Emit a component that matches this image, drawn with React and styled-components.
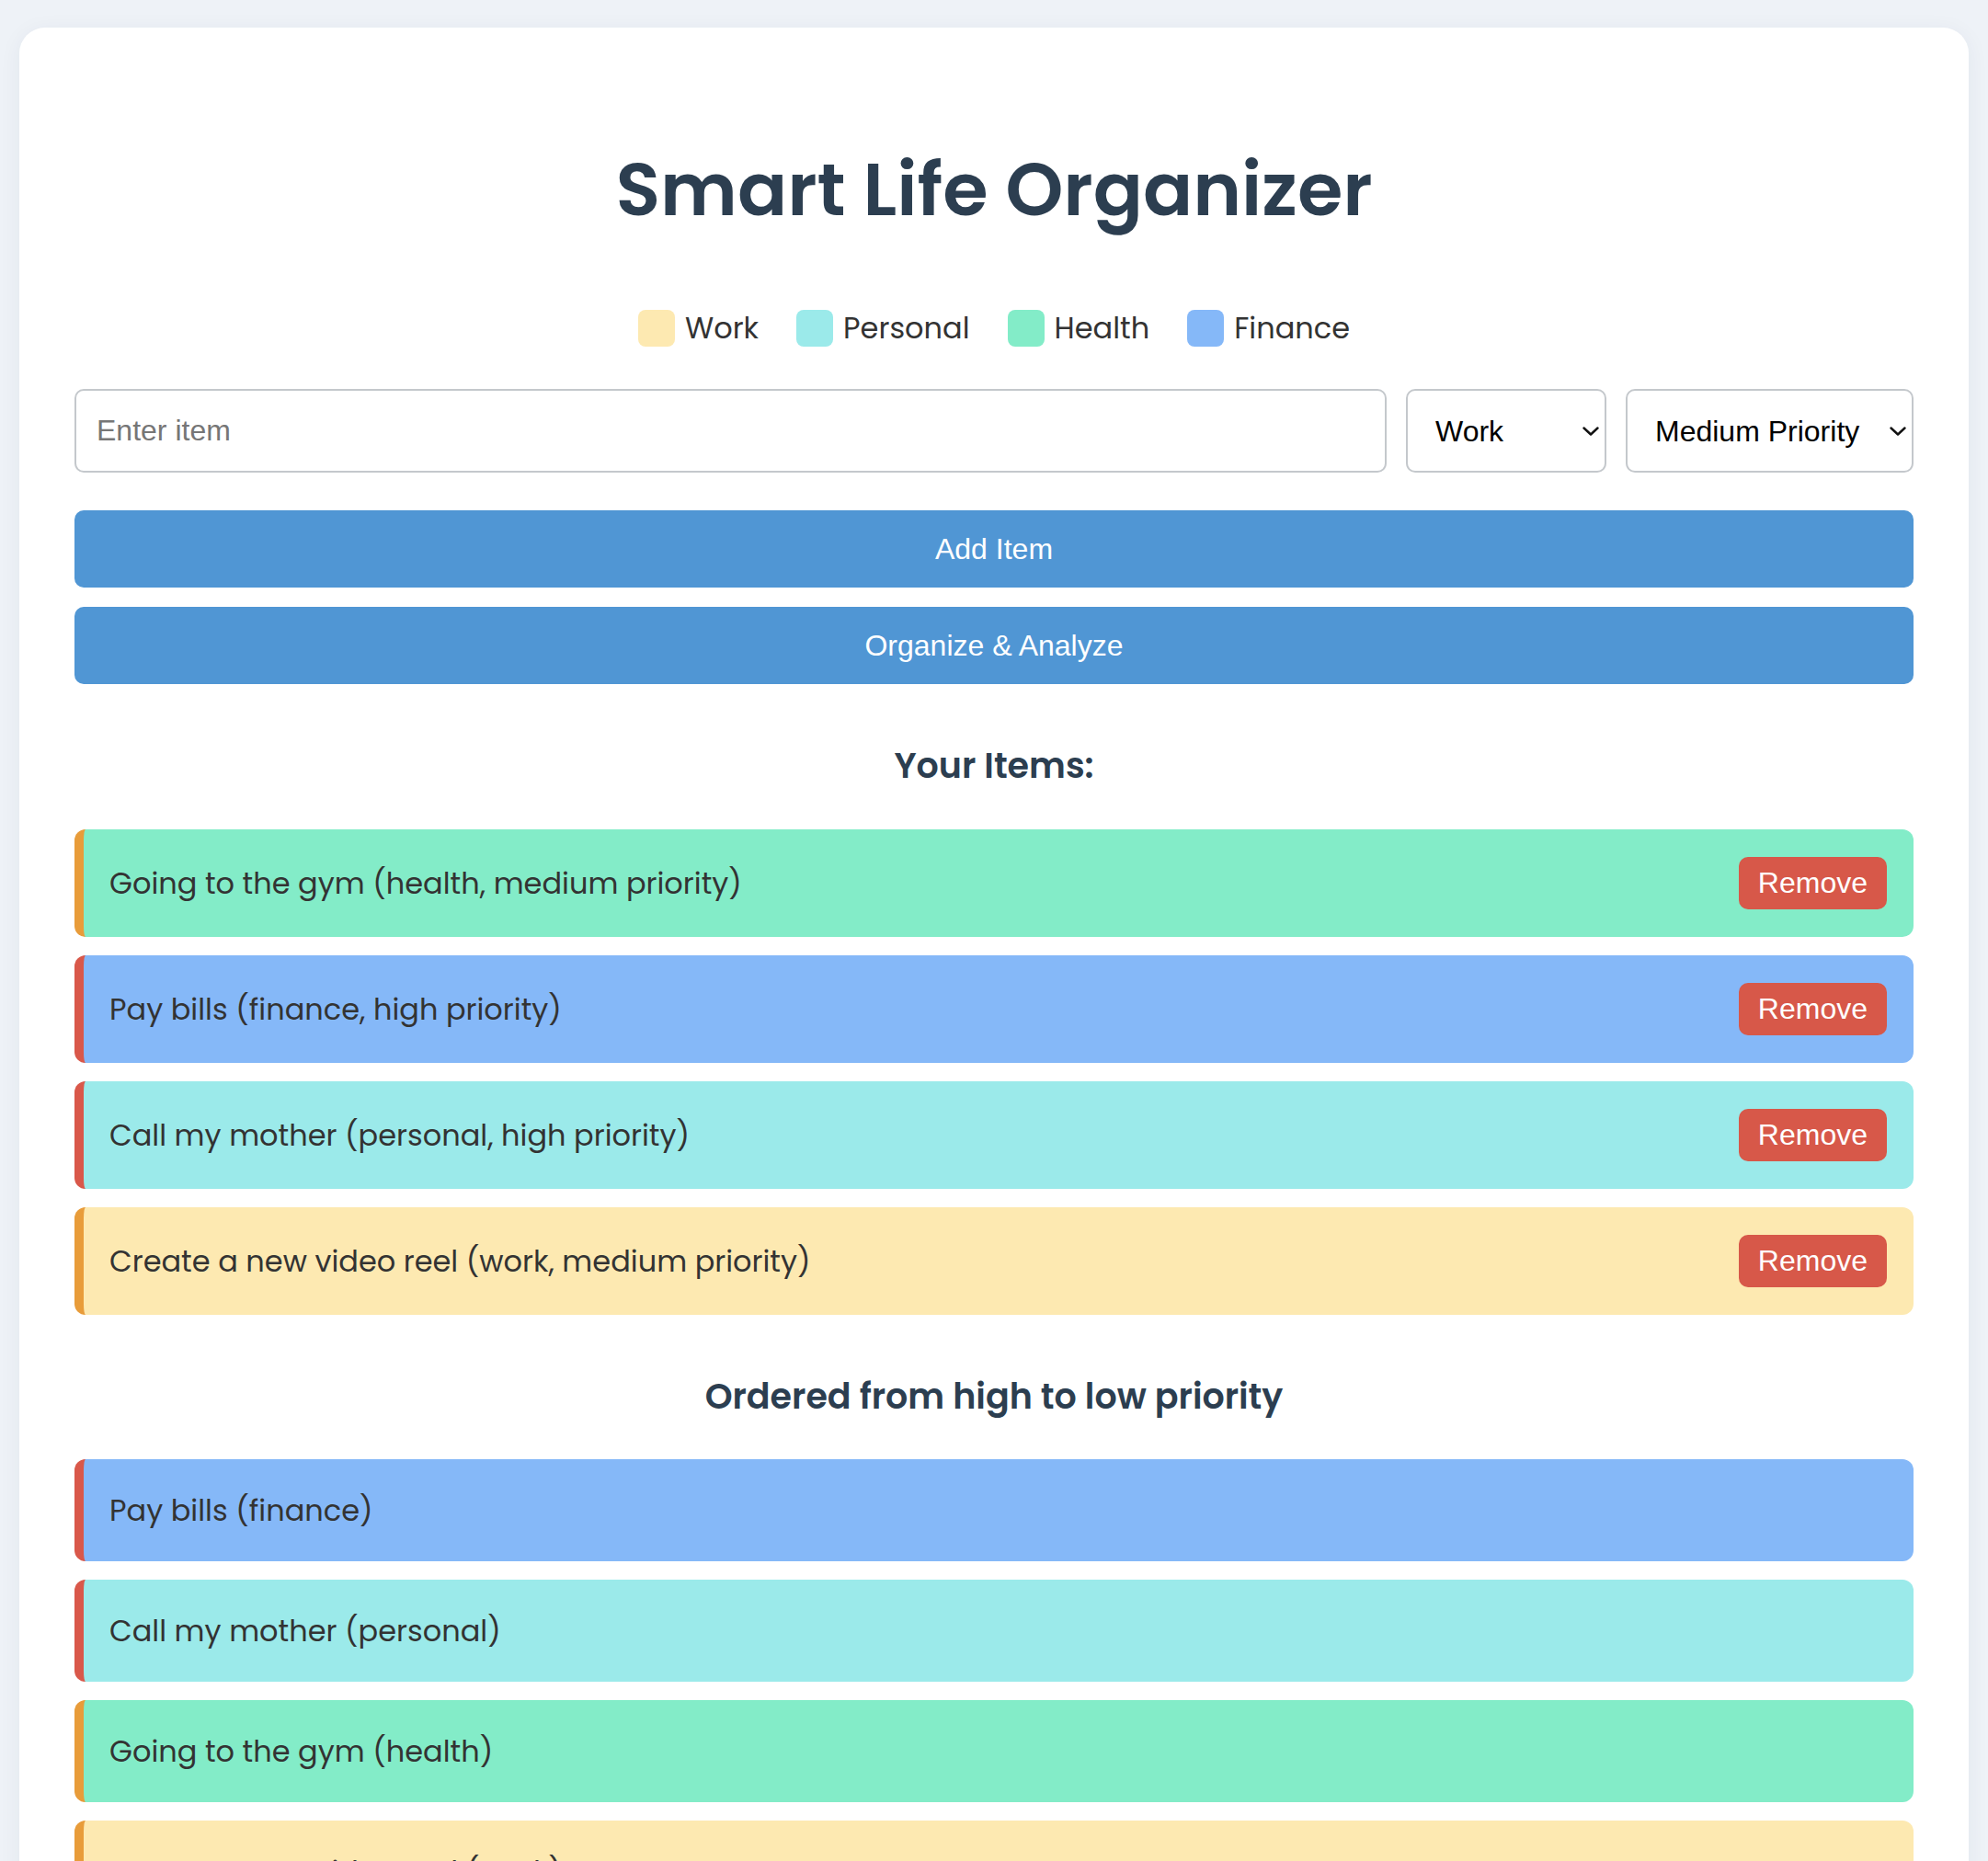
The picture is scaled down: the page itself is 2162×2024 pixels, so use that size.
import React, { useState } from 'react';
import styled, { createGlobalStyle } from 'styled-components';

const GlobalStyle = createGlobalStyle`
  html, body {
    margin: 0;
    padding: 0;
    background: #eef2f7;
  }
  * {
    box-sizing: border-box;
  }
`;

const COLORS = {
  work: '#fde9b1',
  personal: '#9beaea',
  health: '#83ecc8',
  finance: '#85b8f8',
};

const PRIORITY = {
  high: '#d9584a',
  medium: '#e89c3a',
  low: '#6fcf97',
};

const initialItems = [
  { id: 1, text: 'Going to the gym', category: 'health', priority: 'medium' },
  { id: 2, text: 'Pay bills', category: 'finance', priority: 'high' },
  { id: 3, text: 'Call my mother', category: 'personal', priority: 'high' },
  { id: 4, text: 'Create a new video reel', category: 'work', priority: 'medium' },
];

const rank = { high: 0, medium: 1, low: 2 };

function Chevron() {
  return (
    <ChevronIcon viewBox="0 0 18 10" width="18" height="10">
      <path d="M1.5 1.5 L9 8.5 L16.5 1.5" fill="none" stroke="#111" strokeWidth="2.4" strokeLinecap="round" strokeLinejoin="round" />
    </ChevronIcon>
  );
}

export default function App() {
  const [items, setItems] = useState(initialItems);
  const [text, setText] = useState('');
  const [category, setCategory] = useState('work');
  const [priority, setPriority] = useState('medium');

  const addItem = () => {
    if (!text.trim()) return;
    setItems([...items, { id: Date.now(), text: text.trim(), category, priority }]);
    setText('');
  };

  const removeItem = (id) => setItems(items.filter((i) => i.id !== id));

  const ordered = [...items].sort((a, b) => rank[a.priority] - rank[b.priority]);

  return (
    <>
      <GlobalStyle />
      <Page>
        <Card>
          <Title>Smart Life Organizer</Title>

          <Legend>
            {Object.keys(COLORS).map((key) => (
              <LegendItem key={key}>
                <Swatch $color={COLORS[key]} />
                {key.charAt(0).toUpperCase() + key.slice(1)}
              </LegendItem>
            ))}
          </Legend>

          <InputRow>
            <TextInput
              placeholder="Enter item"
              value={text}
              onChange={(e) => setText(e.target.value)}
            />
            <SelectWrap $width="218px">
              <Select value={category} onChange={(e) => setCategory(e.target.value)}>
                <option value="work">Work</option>
                <option value="personal">Personal</option>
                <option value="health">Health</option>
                <option value="finance">Finance</option>
              </Select>
              <Chevron />
            </SelectWrap>
            <SelectWrap $width="313px">
              <Select value={priority} onChange={(e) => setPriority(e.target.value)}>
                <option value="high">High Priority</option>
                <option value="medium">Medium Priority</option>
                <option value="low">Low Priority</option>
              </Select>
              <Chevron />
            </SelectWrap>
          </InputRow>

          <ActionButton onClick={addItem}>Add Item</ActionButton>
          <ActionButton>Organize &amp; Analyze</ActionButton>

          <SectionTitle>Your Items:</SectionTitle>
          <List>
            {items.map((item) => (
              <Item key={item.id} $bg={COLORS[item.category]} $border={PRIORITY[item.priority]}>
                <span>
                  {item.text} ({item.category}, {item.priority} priority)
                </span>
                <RemoveButton onClick={() => removeItem(item.id)}>Remove</RemoveButton>
              </Item>
            ))}
          </List>

          <SectionTitle>Ordered from high to low priority</SectionTitle>
          <List>
            {ordered.map((item) => (
              <OrderedItem key={item.id} $bg={COLORS[item.category]} $border={PRIORITY[item.priority]}>
                {item.text} ({item.category})
              </OrderedItem>
            ))}
          </List>
        </Card>
      </Page>
    </>
  );
}

const Page = styled.div`
  padding: 30px 21px 40px;
  font-family: 'Poppins', 'Inter', 'Noto Sans', sans-serif;
`;

const Card = styled.div`
  background: #ffffff;
  border-radius: 28px;
  padding: 0 60px 60px;
  box-shadow: 0 4px 24px rgba(30, 50, 80, 0.06);
`;

const Title = styled.h1`
  margin: 0;
  padding-top: 128px;
  text-align: center;
  font-size: 80px;
  line-height: 1.2;
  font-weight: 600;
  color: #2c3e50;
`;

const Legend = styled.div`
  display: flex;
  justify-content: center;
  gap: 41px;
  margin-top: 83px;
`;

const LegendItem = styled.div`
  display: flex;
  align-items: center;
  gap: 11px;
  font-size: 32px;
  line-height: 40px;
  color: #333333;
`;

const Swatch = styled.span`
  width: 40px;
  height: 40px;
  border-radius: 8px;
  background: ${(p) => p.$color};
`;

const InputRow = styled.div`
  display: flex;
  gap: 21px;
  margin-top: 46px;
  height: 91px;
`;

const fieldBase = `
  height: 100%;
  border: 2px solid #c4c8cc;
  border-radius: 10px;
  background: #ffffff;
  font-family: 'Liberation Sans', Arial, sans-serif;
  font-size: 32px;
  outline: none;
`;

const TextInput = styled.input`
  ${fieldBase}
  flex: 1;
  padding: 0 22px;
  color: #222;

  &::placeholder {
    color: #767676;
  }
`;

const SelectWrap = styled.div`
  position: relative;
  width: ${(p) => p.$width};
  height: 100%;
`;

const Select = styled.select`
  ${fieldBase}
  width: 100%;
  appearance: none;
  -webkit-appearance: none;
  padding: 0 40px 0 30px;
  color: #000;
`;

const ChevronIcon = styled.svg`
  position: absolute;
  right: 8px;
  top: 41px;
  pointer-events: none;
`;

const ActionButton = styled.button`
  display: block;
  width: 100%;
  height: 84px;
  margin-top: 21px;
  border: none;
  border-radius: 10px;
  background: #5096d4;
  color: #ffffff;
  font-family: 'Liberation Sans', Arial, sans-serif;
  font-size: 32px;
  cursor: pointer;

  &:first-of-type {
    margin-top: 41px;
  }
`;

const SectionTitle = styled.h2`
  margin: 66px 0 46px;
  text-align: center;
  font-size: 38px;
  line-height: 1.2;
  font-weight: 600;
  color: #2c3e50;
`;

const List = styled.div`
  display: flex;
  flex-direction: column;
  gap: 20px;
`;

const Item = styled.div`
  display: flex;
  align-items: center;
  justify-content: space-between;
  padding: 30px 29px 30px 28px;
  border-left: 10px solid ${(p) => p.$border};
  border-radius: 12px;
  background: ${(p) => p.$bg};
  font-size: 32px;
  line-height: 51px;
  color: #333333;
`;

const OrderedItem = styled(Item)`
  display: block;
`;

const RemoveButton = styled.button`
  padding: 10px 21px;
  border: none;
  border-radius: 10px;
  background: #d75849;
  color: #ffffff;
  font-family: 'Liberation Sans', Arial, sans-serif;
  font-size: 32px;
  line-height: 37px;
  cursor: pointer;
`;
